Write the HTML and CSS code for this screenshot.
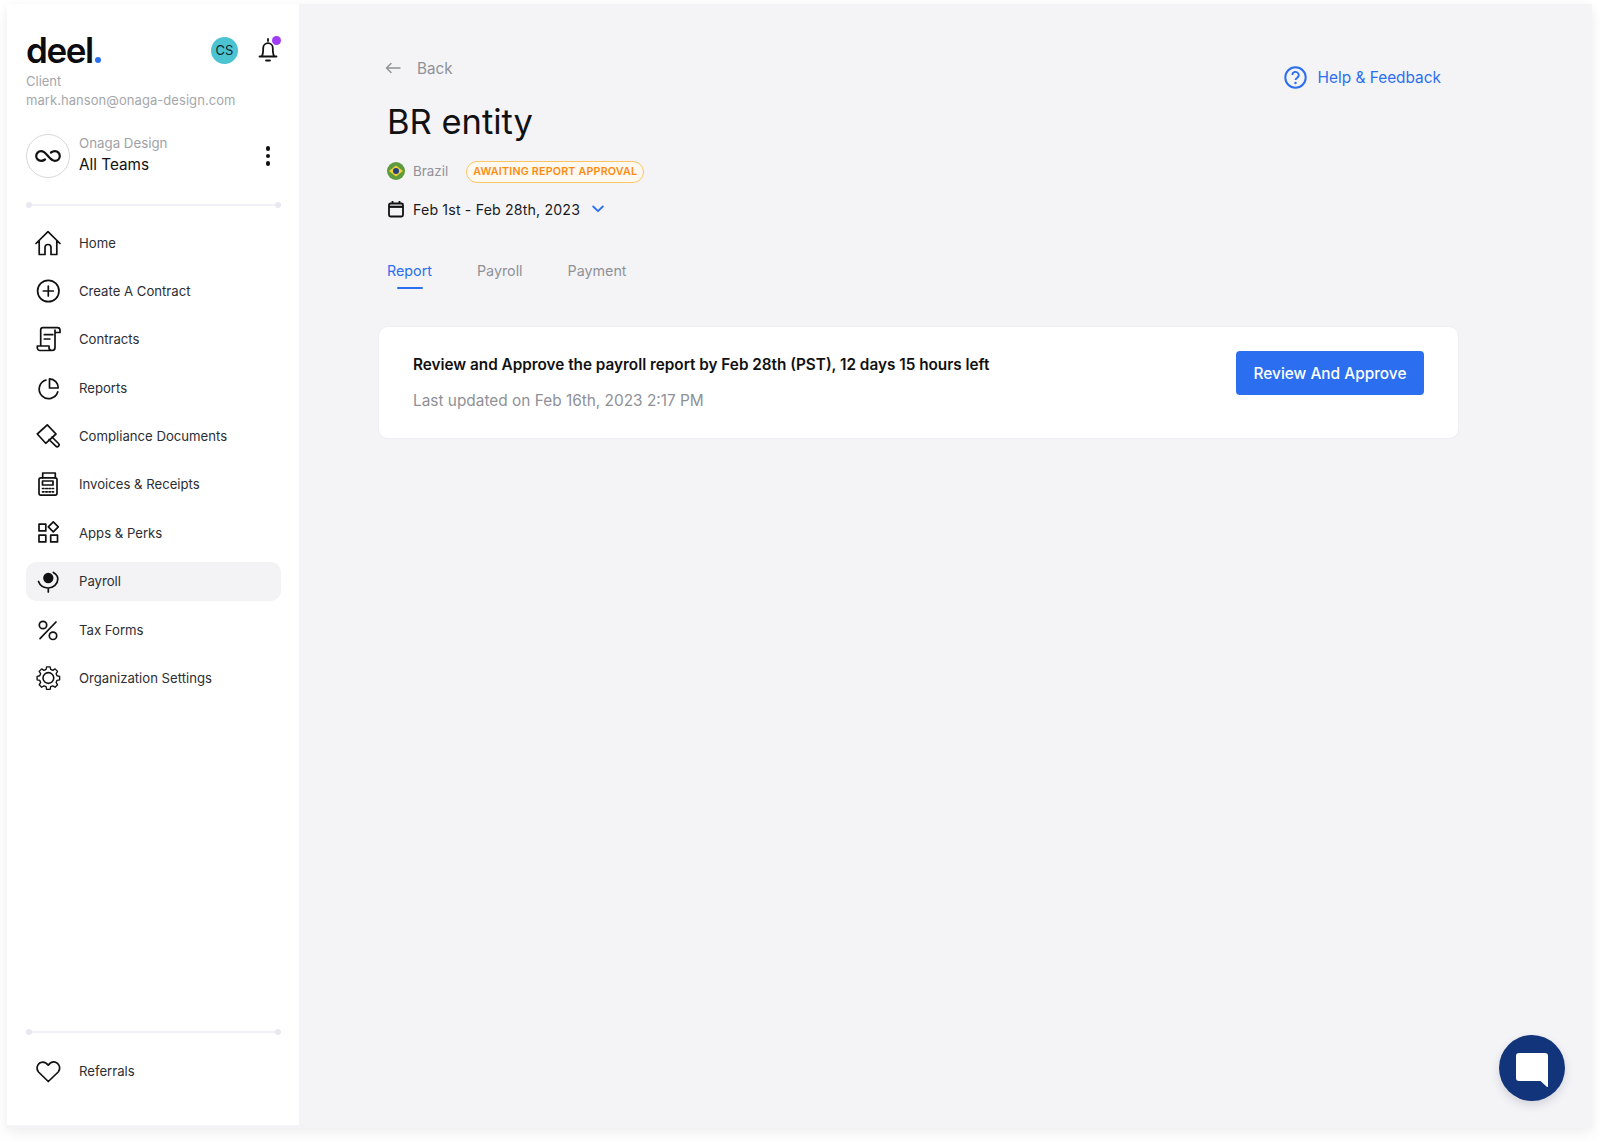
FILE: index.html
```html
<!DOCTYPE html>
<html lang="en">
<head>
<meta charset="utf-8">
<title>BR entity</title>
<link rel="stylesheet" href="styles.css">
</head>
<body>
<div class="window">
  <aside class="sidebar">
    <div class="brand-row">
      <span class="logo">deel<i class="logo-dot"></i></span>
      <span class="avatar">CS</span>
      <span class="bell">
        <svg width="24" height="26" viewBox="0 0 24 26" fill="none" stroke="#111" stroke-width="1.800" stroke-linecap="round" stroke-linejoin="round"><path d="M12 2v2M6 19c1-1.800 1.200-4 1.200-8a4.800 4.800 0 0 1 9.600 0c0 4 .2 6.200 1.200 8M3.500 19.500h17M10 23.500h4"/></svg>
        <i class="bell-dot"></i>
      </span>
    </div>
    <div class="role">Client</div>
    <div class="email">mark.hanson@onaga-design.com</div>
    <div class="org">
      <span class="org-mark">
        <svg width="28" height="14" viewBox="0 0 28 14" fill="none" stroke="#111" stroke-width="2.200" stroke-linecap="round"><path d="M11 10.500c-1.200.9-2.500 1.300-4 1.300a4.800 4.800 0 0 1 0-9.600c2.500 0 4.500 1.800 7 4.800s4.500 4.800 7 4.800a4.800 4.800 0 0 0 0-9.600c-1.500 0-2.800.4-4 1.300"/></svg>
      </span>
      <span class="org-text">
        <span class="org-name">Onaga Design</span>
        <span class="org-team">All Teams</span>
      </span>
      <span class="kebab"><i></i><i></i><i></i></span>
    </div>
    <div class="rule"></div>
    <nav class="nav">
      <a class="nav-item"><svg class="ico" viewBox="0 0 26 26"><path d="M1 13.500 13 1.700l12 11.800M4.200 10.500v14h5.800v-7a3 3 0 0 1 6 0v7h5.800v-14"/></svg>Home</a>
      <a class="nav-item"><svg class="ico" viewBox="0 0 26 26"><circle cx="13.300" cy="13" r="10.700"/><path d="M13.300 8v10M8.300 13h10"/></svg>Create A Contract</a>
      <a class="nav-item"><svg class="ico" viewBox="0 0 26 26"><path d="M5.700 19V4a2.300 2.300 0 0 1 2.300-2.300h14.500a2.500 2.500 0 0 1 2.500 2.500v2.300h-5M20 4v17.500a3 3 0 0 1-3 3H5a2.700 2.700 0 0 1-2.700-2.700V20H14v1.500a3 3 0 0 0 3 3M9.300 8.700h8.500M9.300 13h5.500"/></svg>Contracts</a>
      <a class="nav-item"><svg class="ico" viewBox="0 0 26 26"><path d="M11 5a9.500 9.500 0 1 0 11.800 11.800"/><path d="M14.500 3.800V13h8.700a8.900 8.900 0 0 0-8.700-9.200z"/></svg>Reports</a>
      <a class="nav-item"><svg class="ico" viewBox="0 0 26 26"><path d="M2.300 11 12.300 1.900 21 11 10.700 20.300zM14 16.500l6.800 6.700a1.700 1.700 0 0 0 2.700-2.700L17 14"/></svg>Compliance Documents</a>
      <a class="nav-item"><svg class="ico" viewBox="0 0 26 26"><rect x="4" y="6.800" width="18" height="17.300" rx="1.800"/><path d="M7.700 6.800V2h12.600v4.800M7.500 10h10.500v4H7.500z"/><path class="dots" d="M7.500 17.500h1.500M10.800 17.500h1.500M14 17.500h1.500M17.300 17.500h1.200M7.500 20.800h1.500M10.800 20.800h1.500M14 20.800h1.500M17.300 20.800h1.200"/></svg>Invoices &amp; Receipts</a>
      <a class="nav-item"><svg class="ico" viewBox="0 0 26 26"><rect x="4" y="4.100" width="6.800" height="6.800"/><path d="M18.300 1.800l5 5-5 5-5-5z"/><rect x="4" y="15.100" width="6.800" height="6.800"/><rect x="15.700" y="15.100" width="6.800" height="6.800"/></svg>Apps &amp; Perks</a>
      <a class="nav-item active"><svg class="ico" viewBox="0 0 26 26"><circle class="solid" cx="13.300" cy="10" r="4.300"/><path d="M3.500 13.500c1.500 4 5 6.500 9.800 6.500 5 0 9.500-4 9.500-9 0-2.700-1.700-5-4.500-6.500M13.300 20v4"/></svg>Payroll</a>
      <a class="nav-item"><svg class="ico" viewBox="0 0 26 26"><path d="M5 21.600 21 5"/><circle cx="8" cy="8" r="3.700"/><circle cx="18" cy="18.800" r="3.700"/></svg>Tax Forms</a>
      <a class="nav-item"><svg class="ico" viewBox="0 0 28 28"><circle cx="14.400" cy="14" r="5.800"/><path d="M11.800 2.500h4.400l.7 3.300 2.600 1.100 2.900-1.800 3.100 3.100-1.800 2.900 1.100 2.600 3.300.7v4.400l-3.300.7-1.100 2.600 1.800 2.900-3.100 3.100-2.900-1.800-2.600 1.100-.7 3.300h-4.400l-.7-3.300-2.600-1.100-2.900 1.800-3.100-3.100 1.800-2.900-1.100-2.600-3.300-.7v-4.400l3.300-.7 1.100-2.600-1.800-2.900 3.100-3.100 2.900 1.800 2.600-1.100z" transform="translate(2.360 -.2) scale(.86)"/></svg>Organization Settings</a>
    </nav>
    <div class="sidebar-foot">
      <div class="rule"></div>
      <a class="nav-item"><svg class="ico" viewBox="0 0 26 26"><path d="M13.300 23.500 3.500 14C1 11 1.800 7 4.700 5c3-1.700 6.300-.8 8.600 2.200C15.500 4.200 19 3.300 22 5c2.900 2 3.700 6 1.200 9z"/></svg>Referrals</a>
    </div>
  </aside>
  <main class="main">
    <header class="top">
      <div class="top-left">
        <a class="back">
          <svg class="back-arrow" width="16" height="12" viewBox="0 0 16 12" fill="none" stroke="#8f9197" stroke-width="1.400" stroke-linecap="round" stroke-linejoin="round"><path d="M15 6H1.500M6 1.500 1.500 6 6 10.500"/></svg>
          Back
        </a>
        <h1 class="title">BR entity</h1>
        <div class="meta">
          <span class="flag">
            <svg width="18" height="18" viewBox="0 0 18 18"><circle cx="9" cy="9" r="9" fill="#5d9b3c"/><path d="M9 3.500 16 9l-7 5.500L2 9z" fill="#f2cf3a"/><circle cx="9" cy="9" r="3" fill="#23407f"/></svg>
          </span>
          <span class="country">Brazil</span>
          <span class="badge">AWAITING REPORT APPROVAL</span>
        </div>
        <div class="period">
          <svg width="18" height="18" viewBox="0 0 18 18" fill="none" stroke="#111" stroke-width="1.800"><rect x="2" y="3.500" width="14" height="13" rx="1.500"/><path d="M2 6.800h14" stroke-width="2.200"/><path d="M5.500 1v3M12.500 1v3"/></svg>
          <span class="period-text">Feb 1st - Feb 28th, 2023</span>
          <svg class="chev" width="12" height="8" viewBox="0 0 12 8" fill="none" stroke="#2b6ff0" stroke-width="1.800" stroke-linecap="round" stroke-linejoin="round"><path d="M1.200 1.500 6 6.200l4.800-4.700"/></svg>
        </div>
      </div>
      <a class="help">
        <svg width="23" height="23" viewBox="0 0 23 23" fill="none" stroke="#2b6ff0" stroke-width="2"><circle cx="11.500" cy="11.500" r="10.200"/><path d="M8.300 9a3.200 3.200 0 1 1 4.700 2.900c-1 .6-1.500 1.100-1.500 2.200" stroke-width="1.800"/><circle cx="11.500" cy="17" r=".6" stroke-width="1.200"/></svg>
        Help &amp; Feedback
      </a>
    </header>
    <div class="tabs">
      <a class="tab current">Report</a>
      <a class="tab">Payroll</a>
      <a class="tab">Payment</a>
    </div>
    <section class="card">
      <div class="card-text">
        <p class="card-title">Review and Approve the payroll report by Feb 28th (PST), 12 days 15 hours left</p>
        <p class="card-sub">Last updated on Feb 16th, 2023 2:17 PM</p>
      </div>
      <button class="cta">Review And Approve</button>
    </section>
    <button class="chat" aria-label="Chat">
      <svg width="34" height="36" viewBox="0 0 34 36"><path d="M4 1h26a3 3 0 0 1 3 3v30.500a.6.600 0 0 1-1 .4L25.500 29H4a3 3 0 0 1-3-3V4a3 3 0 0 1 3-3z" fill="#fff"/></svg>
    </button>
  </main>
</div>
</body>
</html>
```
FILE: styles.css
```css
* { box-sizing: border-box; }
html, body { height: 100%; }
body {
  margin: 0;
  padding: 4px 8px 13px 7px;
  background: #fff;
  font-family: "Inter", "Liberation Sans", sans-serif;
  color: #111;
}
.window {
  position: relative;
  display: flex;
  height: 100%;
  background: #f4f4f7;
  box-shadow: 0 4px 12px rgba(30, 30, 50, .08);
}
.sidebar {
  width: 292px;
  height: 1121px;
  flex: none;
  display: flex;
  flex-direction: column;
  padding: 31px 18px 0 19px;
  background: #fff;
}
.brand-row { display: flex; align-items: center; height: 33px; }
.logo {
  font-size: 35px;
  font-weight: 600;
  line-height: 33px;
  letter-spacing: -1.400px;
  color: #0c0c10;
  flex: 1;
  position: relative;
  top: -1px;
}
.logo-dot {
  display: inline-block;
  width: 6px;
  height: 6px;
  margin-left: 2px;
  border-radius: 50%;
  background: #2b6ff0;
}
.avatar {
  width: 27px;
  height: 27px;
  margin-right: 18px;
  margin-top: -2px;
  border-radius: 50%;
  background: #4cc3d1;
  font-size: 13px;
  line-height: 27px;
  text-align: center;
  color: #14262b;
}
.bell { position: relative; width: 24px; height: 26px; margin: -3px 1px 0 0; }
.bell-dot {
  position: absolute;
  top: -1px;
  right: -1px;
  width: 9px;
  height: 9px;
  border-radius: 50%;
  background: #a03cf5;
}
.role, .email { font-size: 13px; line-height: 19px; color: #a5a7ad; }
.role { margin-top: 4px; }
.email { letter-spacing: .06px; }
.org { display: flex; align-items: center; margin-top: 24px; height: 44px; }
.org-mark {
  width: 44px;
  height: 44px;
  flex: none;
  display: flex;
  align-items: center;
  justify-content: center;
  border: 1px solid #d8d8dc;
  border-radius: 50%;
}
.org-text { display: flex; flex-direction: column; flex: 1; margin: -2px 0 0 9px; }
.org-name { font-size: 13.300px; line-height: 20px; color: #a0a2a8; }
.org-team { font-size: 15.300px; line-height: 24px; color: #111; }
.kebab { display: flex; flex-direction: column; gap: 3px; margin-right: 11px; }
.kebab i { width: 4.500px; height: 4.500px; border-radius: 50%; background: #111; }
.rule {
  position: relative;
  height: 2px;
  margin: 26px 1px 0;
  background: #f0f0f6;
}
.rule::before, .rule::after {
  content: "";
  position: absolute;
  top: -2px;
  width: 6px;
  height: 6px;
  border-radius: 50%;
  background: #e8e8f0;
}
.rule::before { left: -1px; }
.rule::after { right: -1px; }
.nav { display: flex; flex-direction: column; gap: 9.400px; margin-top: 17px; }
.nav-item {
  display: flex;
  align-items: center;
  height: 39px;
  padding-left: 9px;
  border-radius: 10px;
  font-size: 13.150px;
  color: #2c2e33;
}
.nav-item.active { background: #f3f3f6; }
.ico {
  width: 26px;
  height: 26px;
  margin-right: 18px;
  flex: none;
  fill: none;
  stroke: #111;
  stroke-width: 1.700;
  stroke-linejoin: round;
  stroke-linecap: round;
}
.ico .solid { fill: #111; }
.sidebar-foot { margin-top: auto; padding-bottom: 35px; }
.sidebar-foot .rule { margin-top: 0; margin-bottom: 18px; }
.main { flex: 1; padding: 52px 133px 0 79px; min-width: 0; }
.top { display: flex; justify-content: space-between; align-items: flex-start; padding: 0 18px 0 9px; }
.top-left { display: flex; flex-direction: column; }
.back { display: flex; align-items: center; gap: 16px; height: 24px; font-size: 15.200px; color: #8f9197; }
.back-arrow { margin-left: -2px; }
.title { margin: 19px 0 0; font-size: 34.500px; font-weight: 400; line-height: 46px; color: #111; }
.meta { display: flex; align-items: center; margin-top: 15px; height: 22px; }
.flag { display: flex; width: 18px; height: 18px; }
.country { margin-left: 8px; font-size: 13.400px; color: #8f9197; }
.badge {
  margin: 2px 0 0 18px;
  padding: 0 6px;
  height: 22px;
  border: 1px solid #fbc565;
  border-radius: 11px;
  background: #fff9f0;
  font-size: 10.700px;
  font-weight: 600;
  line-height: 20px;
  letter-spacing: .2px;
  color: #fb8c12;
}
.period { display: flex; align-items: center; margin-top: 16px; height: 22px; font-size: 14.200px; color: #1a1a1e; }
.period-text { margin-left: 8px; letter-spacing: .15px; }
.chev { margin-left: 12px; }
.help { display: flex; align-items: center; gap: 11px; margin-top: 10px; font-size: 15.400px; color: #2b6ff0; }
.tabs { display: flex; gap: 45px; margin-top: 39px; padding-left: 9px; }
.tab { position: relative; font-size: 14.300px; line-height: 24px; color: #8f9197; }
.tab.current { color: #2b6ff0; }
.tab.current::after {
  content: "";
  position: absolute;
  left: 10px;
  right: 9px;
  bottom: -6px;
  height: 2px;
  border-radius: 1px;
  background: #2b6ff0;
}
.card {
  display: flex;
  align-items: flex-start;
  justify-content: space-between;
  margin-top: 43px;
  padding: 24px 34px 42px 34px;
  height: 113px;
  background: #fff;
  border: 1px solid #eeeef3;
  border-radius: 10px;
}
.card-text { min-width: 0; padding-top: 3px; }
.card-title { margin: 0; font-size: 15.300px; font-weight: 600; line-height: 22px; color: #111; }
.card-sub { margin: 14px 0 0; font-size: 15.400px; line-height: 22px; color: #8f9197; }
.cta {
  width: 188px;
  height: 44px;
  border: 0;
  border-radius: 4px;
  background: #2b6ff0;
  color: #fff;
  font: 500 15.400px "Inter", "Liberation Sans", sans-serif;
}
.chat {
  position: absolute;
  right: 27px;
  bottom: 27px;
  width: 66px;
  height: 66px;
  display: flex;
  align-items: center;
  justify-content: center;
  padding: 3px 0 0;
  border: 0;
  border-radius: 50%;
  background: #12347a;
  box-shadow: 0 4px 10px rgba(20, 30, 60, .15);
}
```
